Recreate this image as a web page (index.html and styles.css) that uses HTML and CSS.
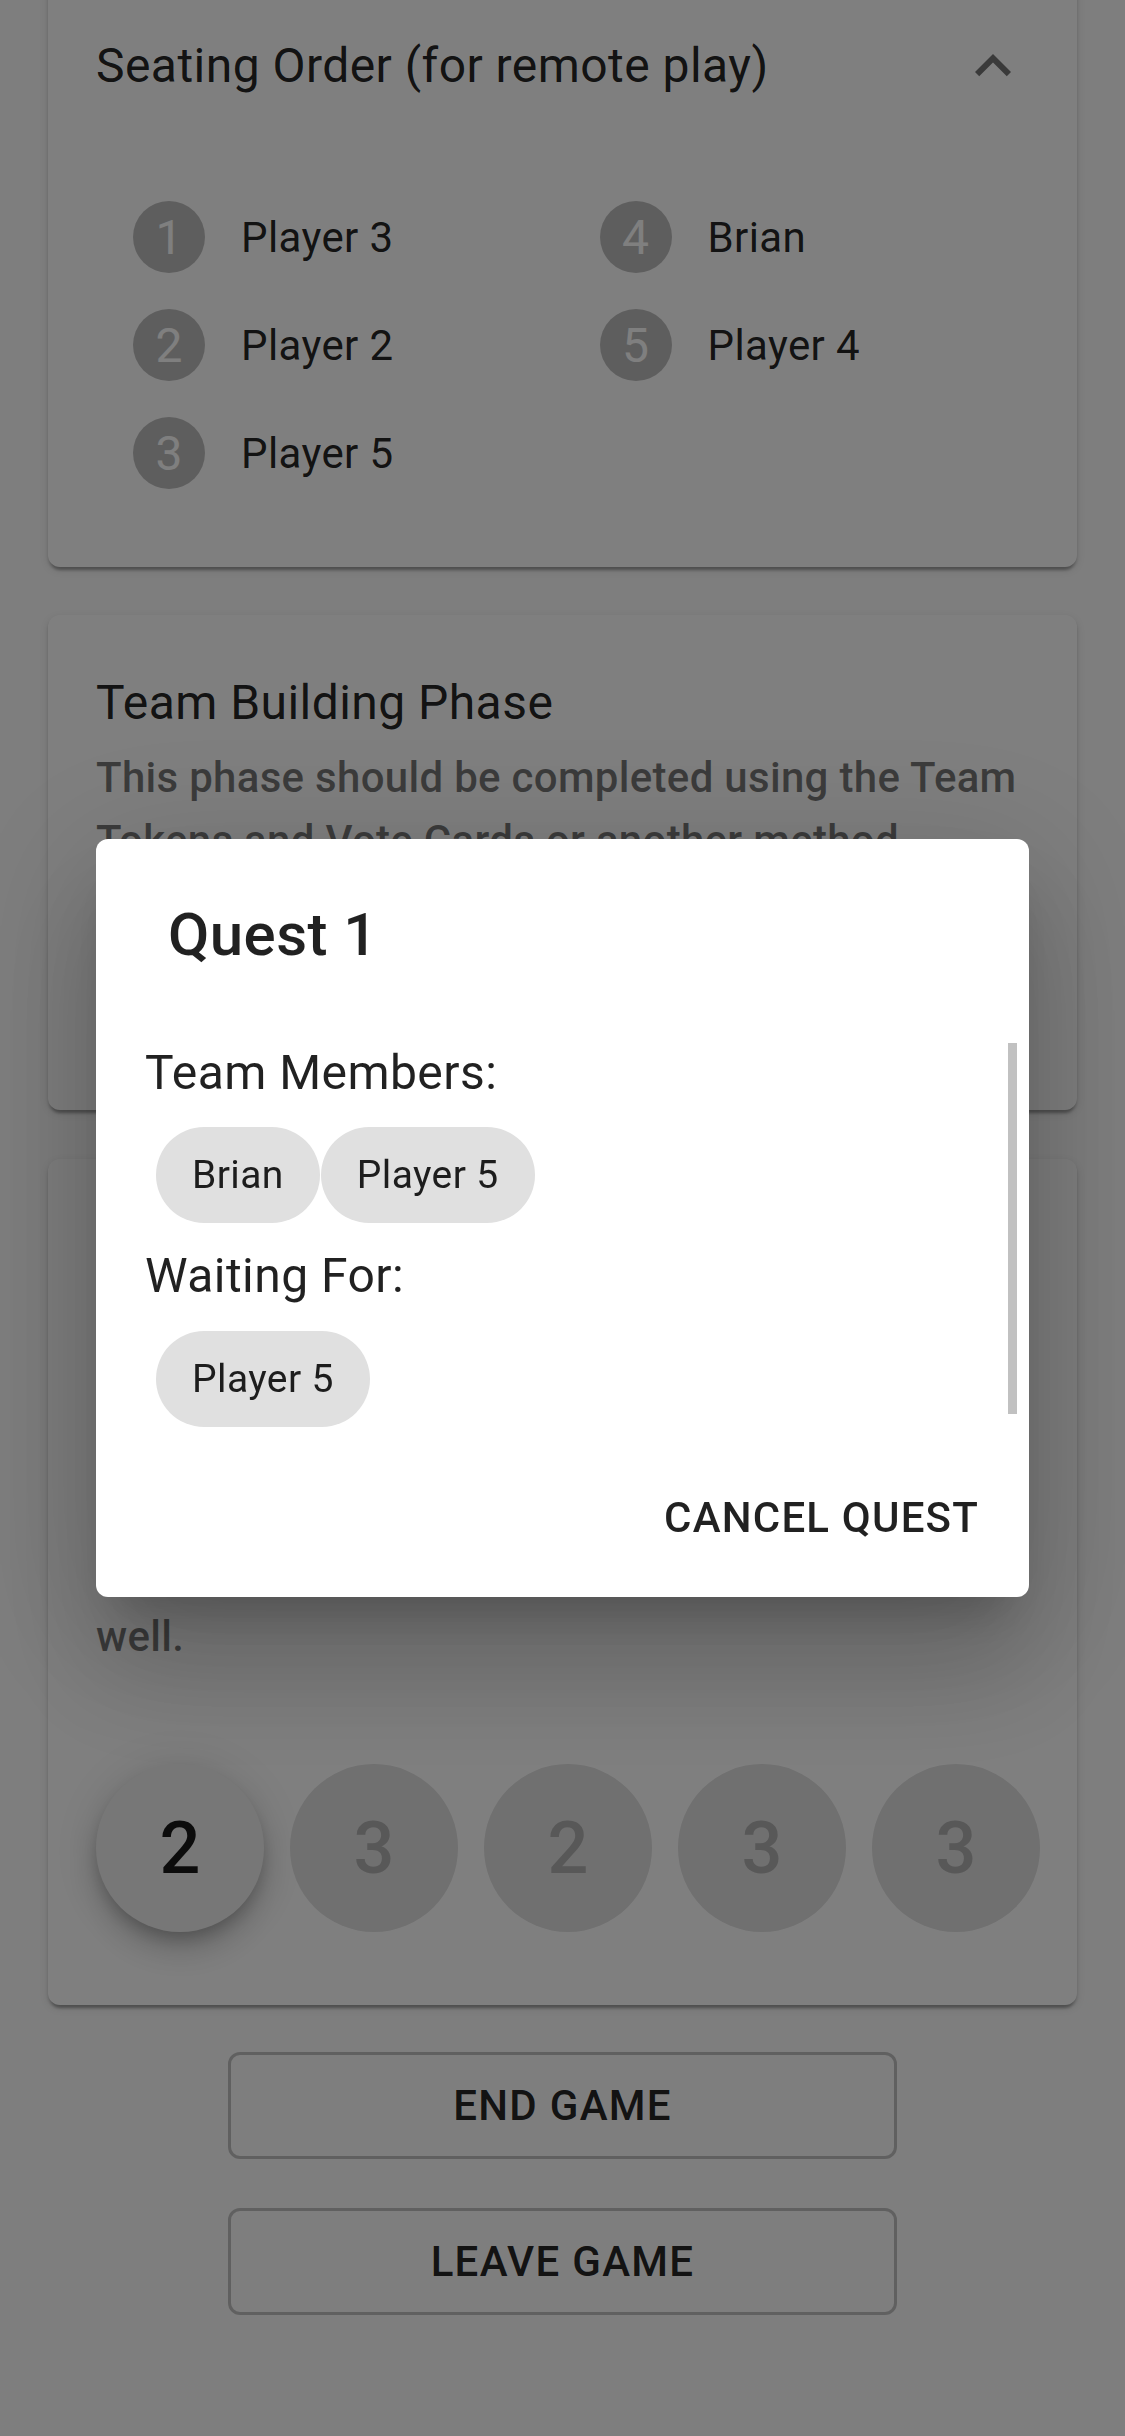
FILE: index.html
```html
<!DOCTYPE html>
<html lang="en">
<head>
<meta charset="utf-8">
<meta name="viewport" content="width=1125">
<title>Quest 1</title>
<link rel="stylesheet" href="styles.css">
</head>
<body>
<div class="page">
  <section class="card card-seating">
    <div class="acc-summary">
      <span class="acc-title">Seating Order (for remote play)</span>
      <svg class="acc-icon" viewBox="0 0 24 24" aria-hidden="true"><path d="M12 8l-6 6 1.41 1.41L12 10.83l4.59 4.58L18 14z"/></svg>
    </div>
    <div class="acc-details">
      <ol class="seat-grid">
        <li class="seat"><span class="seat-num">1</span><span class="seat-name">Player 3</span></li>
        <li class="seat"><span class="seat-num">2</span><span class="seat-name">Player 2</span></li>
        <li class="seat"><span class="seat-num">3</span><span class="seat-name">Player 5</span></li>
        <li class="seat"><span class="seat-num">4</span><span class="seat-name">Brian</span></li>
        <li class="seat"><span class="seat-num">5</span><span class="seat-name">Player 4</span></li>
      </ol>
    </div>
  </section>

  <section class="card card-phase">
    <h2 class="card-title">Team Building Phase</h2>
    <p class="card-text">This phase should be completed using the Team<br>Tokens and Vote Cards or another method.</p>
  </section>

  <section class="card card-quest">
    <div class="covered" aria-hidden="true"></div>
    <p class="card-text">well.</p>
    <div class="quest-row">
      <span class="quest-fab is-current">2</span>
      <span class="quest-fab">3</span>
      <span class="quest-fab">2</span>
      <span class="quest-fab">3</span>
      <span class="quest-fab">3</span>
    </div>
  </section>

  <div class="game-actions">
    <button class="btn-outline" type="button">End Game</button>
    <button class="btn-outline" type="button">Leave Game</button>
  </div>
</div>

<div class="backdrop">
  <div class="dialog" role="dialog">
    <h2 class="dialog-title">Quest 1</h2>
    <div class="dialog-content">
      <div class="dialog-label">Team Members:</div>
      <div class="chip-row">
        <span class="chip">Brian</span>
        <span class="chip">Player 5</span>
      </div>
      <div class="dialog-label">Waiting For:</div>
      <div class="chip-row chip-row-last">
        <span class="chip">Player 5</span>
      </div>
      <span class="scroll-thumb"></span>
    </div>
    <div class="dialog-actions">
      <button class="btn-text" type="button">Cancel Quest</button>
    </div>
  </div>
</div>
</body>
</html>
```

FILE: styles.css
```css
* {
  box-sizing: border-box;
}

html, body {
  margin: 0;
  padding: 0;
}

body {
  background: #fcfcfc;
  font-family: Roboto, "Helvetica Neue", Arial, sans-serif;
  color: rgba(0, 0, 0, 0.87);
  width: 1125px;
  height: 2436px;
  overflow: hidden;
}

.page {
  display: flex;
  flex-direction: column;
  padding: 0 48px;
}

.card {
  background: #fff;
  border-radius: 12px;
  box-shadow: 0 6px 3px -3px rgba(0, 0, 0, 0.2), 0 3px 3px 0 rgba(0, 0, 0, 0.14), 0 3px 9px 0 rgba(0, 0, 0, 0.12);
}

/* Seating accordion */
.card-seating {
  margin-top: -30px;
}

.acc-summary {
  height: 192px;
  display: flex;
  align-items: center;
  justify-content: space-between;
  padding: 0 48px;
}

.acc-title {
  font-size: 48px;
  line-height: 1.5;
  letter-spacing: 0.45px;
}

.acc-icon {
  width: 72px;
  height: 72px;
  fill: rgba(0, 0, 0, 0.54);
}

.acc-details {
  padding: 21px 48px 60px;
}

.seat-grid {
  list-style: none;
  margin: 0;
  padding: 0;
  display: grid;
  grid-template-columns: 1fr 1fr;
  grid-template-rows: repeat(3, 108px);
  grid-auto-flow: column;
}

.seat {
  display: flex;
  align-items: center;
  gap: 36px;
  padding-left: 37px;
}

.seat-num {
  width: 72px;
  height: 72px;
  border-radius: 50%;
  background: #bdbdbd;
  color: #fff;
  font-size: 48px;
  display: flex;
  align-items: center;
  justify-content: center;
  flex-shrink: 0;
}

.seat-name {
  font-size: 42px;
  letter-spacing: 0.4px;
}

/* Phase cards */
.card-phase {
  margin-top: 48px;
  height: 495px;
  padding: 52px 48px 48px;
  overflow: hidden;
}

.card-quest {
  margin-top: 49px;
  padding: 52px 48px 73px;
}

.covered {
  height: 394px;
}

.card-title {
  margin: 0 0 7px;
  font-size: 48px;
  font-weight: 400;
  line-height: 1.5;
  letter-spacing: 0.45px;
}

.card-text {
  margin: 0;
  font-size: 42px;
  font-weight: 500;
  line-height: 63px;
  color: rgba(0, 0, 0, 0.54);
  white-space: nowrap;
  letter-spacing: 0.3px;
}

.quest-row {
  display: flex;
  gap: 26px;
  margin-top: 96px;
}

.quest-fab {
  flex-shrink: 0;
  width: 168px;
  height: 168px;
  border-radius: 50%;
  background: #e0e0e0;
  color: #b0b0b0;
  font-size: 72px;
  font-weight: 500;
  display: flex;
  align-items: center;
  justify-content: center;
}

.quest-fab.is-current {
  background: #efefef;
  color: rgba(0, 0, 0, 0.9);
  box-shadow: 0 9px 15px -3px rgba(0, 0, 0, 0.2), 0 18px 30px 0 rgba(0, 0, 0, 0.14), 0 3px 54px 0 rgba(0, 0, 0, 0.12);
}

/* Bottom buttons */
.game-actions {
  display: flex;
  flex-direction: column;
  align-items: center;
  gap: 49px;
  margin-top: 47px;
}

.btn-outline {
  width: 669px;
  height: 107px;
  border: 3px solid rgba(0, 0, 0, 0.23);
  border-radius: 12px;
  background: transparent;
  font-family: inherit;
  font-size: 42px;
  font-weight: 500;
  letter-spacing: 1.3px;
  text-transform: uppercase;
  color: rgba(0, 0, 0, 0.87);
}

/* Dialog */
.backdrop {
  position: fixed;
  inset: 0;
  background: rgba(0, 0, 0, 0.5);
  display: flex;
  align-items: center;
  justify-content: center;
}

.dialog {
  width: 933px;
  background: #fff;
  border-radius: 12px;
  display: flex;
  flex-direction: column;
  box-shadow: 0 33px 45px -21px rgba(0, 0, 0, 0.2), 0 72px 114px 9px rgba(0, 0, 0, 0.14), 0 27px 138px 24px rgba(0, 0, 0, 0.12);
}

.dialog-title {
  margin: 0;
  padding: 48px 72px;
  font-size: 60px;
  font-weight: 500;
  line-height: 96px;
  letter-spacing: 0.45px;
}

.dialog-content {
  position: relative;
  padding: 6px 50px 12px 49px;
}

.dialog-label {
  font-size: 48px;
  line-height: 72px;
  letter-spacing: 0.45px;
}

.chip-row {
  display: flex;
  gap: 1px;
  padding-left: 11px;
  margin: 18px 0 17px;
}

.chip-row-last {
  margin: 19px 0 0;
}

.chip {
  height: 96px;
  padding: 0 36px;
  border-radius: 48px;
  background: #e0e0e0;
  font-size: 39px;
  letter-spacing: 0.4px;
  display: flex;
  align-items: center;
}

.scroll-thumb {
  position: absolute;
  top: 12px;
  right: 12px;
  width: 9px;
  height: 371px;
  background: #c1c1c1;
}

.dialog-actions {
  display: flex;
  justify-content: flex-end;
  padding: 24px 26px 24px 24px;
}

.btn-text {
  border: 0;
  background: transparent;
  padding: 18px 24px;
  font-family: inherit;
  font-size: 42px;
  font-weight: 500;
  line-height: 1.75;
  letter-spacing: 1.2px;
  text-transform: uppercase;
  color: rgba(0, 0, 0, 0.87);
}
```
